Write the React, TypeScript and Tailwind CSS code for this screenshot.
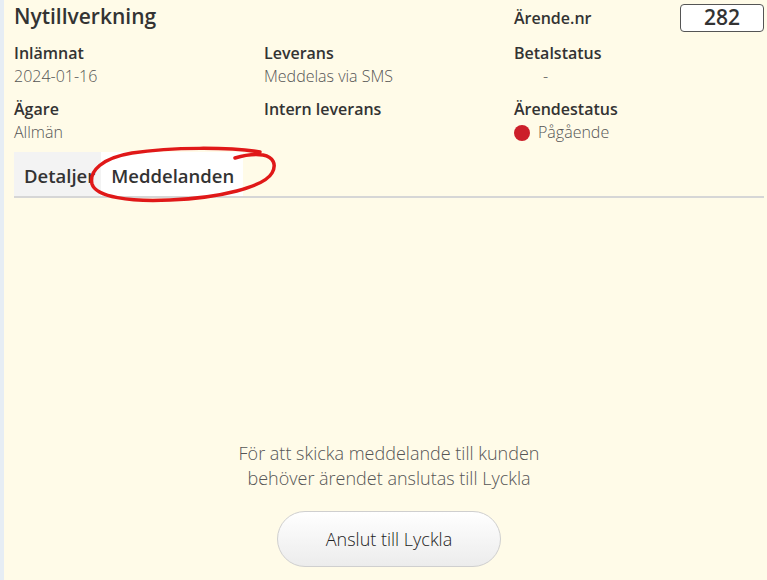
import React from 'react'

const font = {fontFamily: '"Open Sans", "Noto Sans", sans-serif'}

function Field({label, value, children}: {label: string; value?: string; children?: React.ReactNode}) {
  return (
    <div className="flex flex-col">
      <span className="text-[16px] font-semibold leading-[23px] text-[#333]">{label}</span>
      {value !== undefined && (
        <span className="text-[16px] font-light leading-[23px] text-[#555]">{value}</span>
      )}
      {children}
    </div>
  )
}

export default function App() {
  return (
    <div style={font} className="flex h-[580px] w-[767px] overflow-hidden bg-[#fffbe8]">
      <div className="w-[4px] shrink-0 bg-[#e6edf4]" />
      <div className="relative flex flex-1 flex-col pl-[10px] pr-[3px]">
        <div className="grid grid-cols-[250px_250px_1fr]">
          <div className="pt-[2px]">
            <h1 className="text-[21px] font-semibold leading-[29px] text-[#333]">Nytillverkning</h1>
          </div>
          <div />
          <div className="flex items-start justify-between pt-[4px]">
            <span className="pt-[3px] text-[16px] font-semibold leading-[23px] text-[#333]">Ärende.nr</span>
            <div className="flex h-[28px] w-[84px] items-center justify-center rounded-[4px] border border-[#555] bg-white text-[21px] font-semibold text-[#333]">
              282
            </div>
          </div>
        </div>

        <div className="mt-[10px] grid grid-cols-[250px_250px_1fr] gap-y-[10px]">
          <Field label="Inlämnat" value="2024-01-16" />
          <Field label="Leverans" value="Meddelas via SMS" />
          <Field label="Betalstatus">
            <span className="pl-[29px] text-[16px] font-light leading-[23px] text-[#555]">-</span>
          </Field>
          <Field label="Ägare" value="Allmän" />
          <Field label="Intern leverans" />
          <Field label="Ärendestatus">
            <div className="flex items-center gap-[8px]">
              <span className="h-[16px] w-[16px] rounded-full bg-[#cc1f2a]" />
              <span className="text-[16px] font-light leading-[23px] text-[#555]">Pågående</span>
            </div>
          </Field>
        </div>

        <div className="mt-[8px] flex border-b-2 border-[#d6d6d6]">
          <button className="h-[44px] bg-[#f3f3f3] pl-[10px] pr-[6px] pt-[3px] text-[18.5px] font-semibold text-[#333]">Detaljer</button>
          <button className="h-[44px] bg-white pl-[10px] pr-[9px] pt-[3px] text-[18.5px] font-semibold text-[#333]">Meddelanden</button>
        </div>

        <div className="flex flex-1 flex-col items-center justify-end pb-[13px]">
          <p className="text-center text-[18px] font-light leading-[25px] text-[#555]">
            För att skicka meddelande till kunden
            <br />
            behöver ärendet anslutas till Lyckla
          </p>
          <button className="mt-[20px] h-[56px] w-[224px] rounded-full border border-[#cfcfcf] bg-gradient-to-b from-white to-[#ececec] text-[18px] font-light text-[#222]">
            Anslut till Lyckla
          </button>
        </div>

        <svg
          className="pointer-events-none absolute left-[76px] top-[140px]"
          width="210"
          height="70"
          viewBox="0 0 210 70"
          fill="none"
        >
          <path
            d="M155 18 C 165 15, 176 14, 183 15 C 193 17, 197 24, 192 33 C 184 47, 140 58, 90 60 C 50 62, 16 57, 12 44 C 9 31, 22 18, 52 13 C 92 7, 150 7, 180 12"
            stroke="#e01818"
            strokeWidth="3.5"
            strokeLinecap="round"
            strokeLinejoin="round"
          />
        </svg>
      </div>
    </div>
  )
}
